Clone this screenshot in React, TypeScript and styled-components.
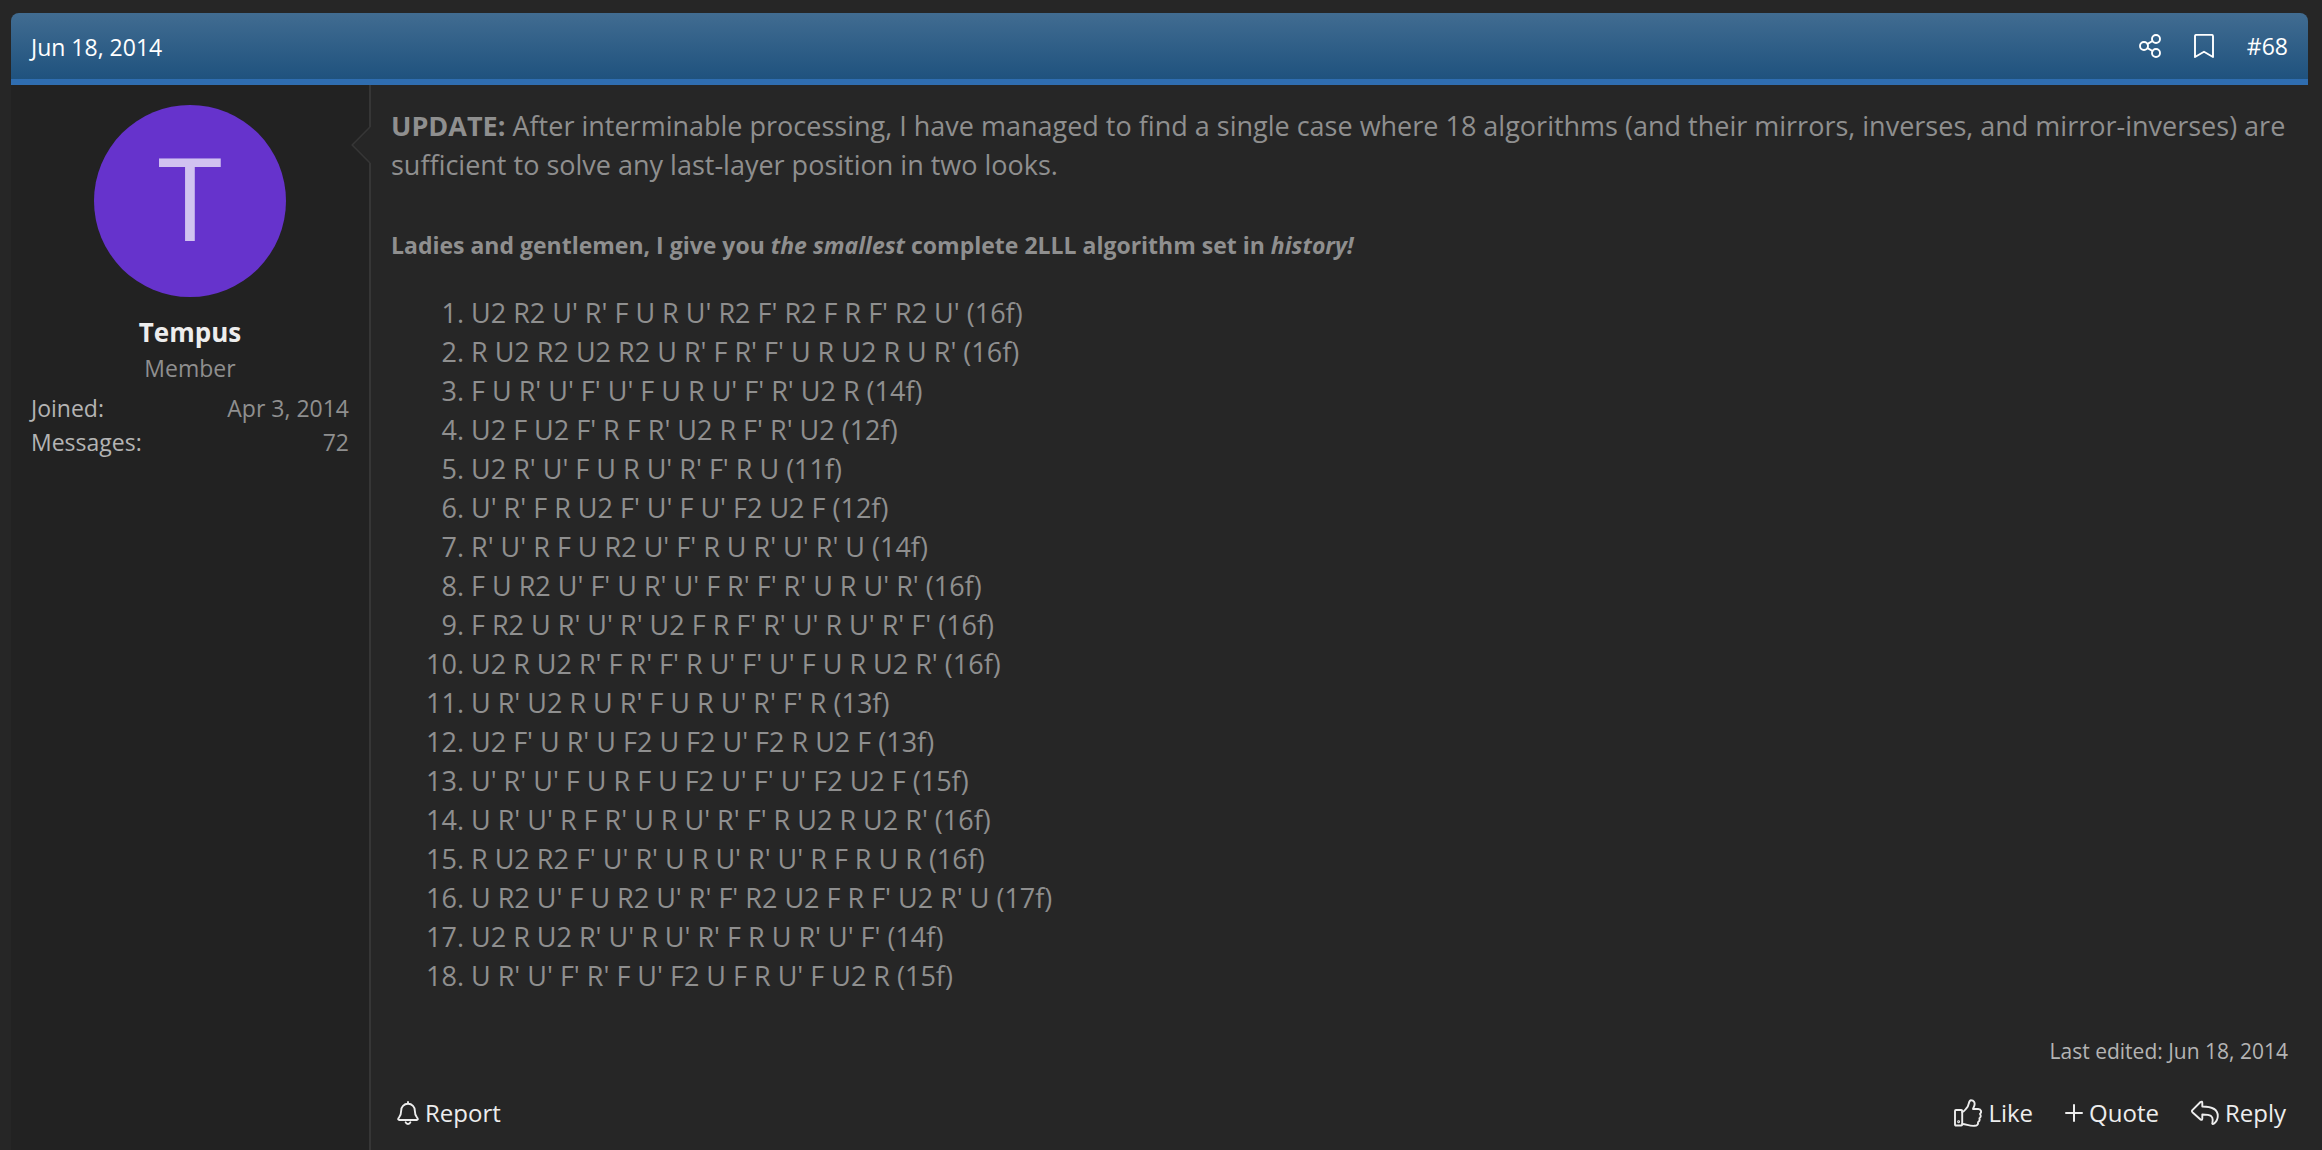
import React from 'react';
import styled, { createGlobalStyle } from 'styled-components';

const GlobalStyle = createGlobalStyle`
  * { box-sizing: border-box; }
  body {
    margin: 0;
    background: #262626;
    color: #8f8f8f;
    font-family: 'Segoe UI', 'Open Sans', 'Noto Sans', sans-serif;
    font-size: 23px;
    line-height: 34px;
  }
`;

const Message = styled.article`
  margin: 13px 14px 0 11px;
`;

const Header = styled.header`
  display: flex;
  justify-content: space-between;
  align-items: center;
  height: 72px;
  padding: 2px 20px 0;
  border-bottom: 6px solid #2f6db0;
  border-radius: 8px 8px 0 0;
  background: linear-gradient(to bottom, #416c91, #1f527e);
  color: #ffffff;
`;

const HeaderActions = styled.div`
  display: flex;
  align-items: center;
  gap: 33px;
  padding-bottom: 2px;
`;

const PlainLink = styled.a`
  display: inline-flex;
  align-items: center;
  color: inherit;
  text-decoration: none;
`;

const Body = styled.div`
  display: flex;
`;

const UserCell = styled.aside`
  flex: 0 0 360px;
  position: relative;
  padding: 20px;
  border-right: 2px solid #363636;
  background: #222222;
  text-align: center;
`;

const Arrow = styled.svg`
  position: absolute;
  top: 41px;
  right: -2px;
`;

const Avatar = styled.a`
  display: flex;
  align-items: center;
  justify-content: center;
  width: 192px;
  height: 192px;
  margin: 0 auto 17px;
  padding-bottom: 10px;
  border-radius: 50%;
  background: #6633cc;
  color: #d1c2f0;
  font-size: 116px;
  line-height: 182px;
  text-decoration: none;
`;

const UserName = styled.h4`
  margin: 0;
  color: #ededed;
  font-size: 26px;
  line-height: 37px;
  font-weight: 700;
`;

const UserTitle = styled.h5`
  margin: 0 0 6px;
  font-size: 23px;
  line-height: 34px;
  font-weight: 400;
`;

const Stat = styled.dl`
  display: flex;
  justify-content: space-between;
  margin: 0;
  dt { color: #b4b4b4; }
  dd { margin: 0; }
`;

const Main = styled.div`
  flex: 1;
  min-width: 0;
  display: flex;
  flex-direction: column;
  padding: 20px;
`;

const Content = styled.div`
  font-size: 27px;
  line-height: 39px;
`;

const Paragraph = styled.p`
  margin: 1px 0 42px;
`;

const Announcement = styled.p`
  margin: 0 0 28px;
  font-size: 23px;
  font-weight: 700;
`;

const Algorithms = styled.ol`
  margin: 0;
  padding-left: 80px;
`;

const LastEdit = styled.div`
  margin-top: 39px;
  color: #b4b4b4;
  font-size: 21px;
  line-height: 34px;
  text-align: right;
`;

const ActionBar = styled.footer`
  display: flex;
  justify-content: space-between;
  margin-top: 26px;
  padding: 0 2px 0 6px;
`;

const ActionGroup = styled.div`
  display: flex;
  gap: 32px;
`;

const Action = styled(PlainLink)`
  gap: 6px;
  color: #ededed;
  font-size: 24px;
  line-height: 38px;
`;

const Icon = styled.svg`
  display: block;
  fill: none;
  stroke: currentColor;
  stroke-width: 1.9;
  stroke-linejoin: round;
  stroke-linecap: round;
`;

const algorithms = [
  "U2 R2 U' R' F U R U' R2 F' R2 F R F' R2 U' (16f)",
  "R U2 R2 U2 R2 U R' F R' F' U R U2 R U R' (16f)",
  "F U R' U' F' U' F U R U' F' R' U2 R (14f)",
  "U2 F U2 F' R F R' U2 R F' R' U2 (12f)",
  "U2 R' U' F U R U' R' F' R U (11f)",
  "U' R' F R U2 F' U' F U' F2 U2 F (12f)",
  "R' U' R F U R2 U' F' R U R' U' R' U (14f)",
  "F U R2 U' F' U R' U' F R' F' R' U R U' R' (16f)",
  "F R2 U R' U' R' U2 F R F' R' U' R U' R' F' (16f)",
  "U2 R U2 R' F R' F' R U' F' U' F U R U2 R' (16f)",
  "U R' U2 R U R' F U R U' R' F' R (13f)",
  "U2 F' U R' U F2 U F2 U' F2 R U2 F (13f)",
  "U' R' U' F U R F U F2 U' F' U' F2 U2 F (15f)",
  "U R' U' R F R' U R U' R' F' R U2 R U2 R' (16f)",
  "R U2 R2 F' U' R' U R U' R' U' R F R U R (16f)",
  "U R2 U' F U R2 U' R' F' R2 U2 F R F' U2 R' U (17f)",
  "U2 R U2 R' U' R U' R' F R U R' U' F' (14f)",
  "U R' U' F' R' F U' F2 U F R U' F U2 R (15f)",
];

export default function App() {
  return (
    <>
      <GlobalStyle />
      <Message>
        <Header>
          <PlainLink href="#post"><time dateTime="2014-06-18">Jun 18, 2014</time></PlainLink>
          <HeaderActions>
            <PlainLink href="#share" aria-label="Share">
              <Icon width="22" height="24" viewBox="0 0 22 24">
                <circle cx="5" cy="12" r="4" />
                <circle cx="17" cy="5" r="4" />
                <circle cx="17" cy="19" r="4" />
                <path d="M8.600 9.900l4.900-2.900M8.600 14.100l4.900 2.900" />
              </Icon>
            </PlainLink>
            <PlainLink href="#bookmark" aria-label="Bookmark">
              <Icon width="20" height="24" viewBox="0 0 20 24">
                <path d="M1 23V2.200Q1 .9 2.300 .9H17.700Q19 .9 19 2.200V23L10 17.800Z" />
              </Icon>
            </PlainLink>
            <PlainLink href="#post-68">#68</PlainLink>
          </HeaderActions>
        </Header>
        <Body>
          <UserCell>
            <Arrow width="20" height="38" viewBox="0 0 20 38">
              <path d="M20 1L18.5 1L1 19L18.5 37H20Z" fill="#262626" />
              <path d="M19 1L1.2 19L19 37" fill="none" stroke="#363636" strokeWidth="1.6" />
            </Arrow>
            <Avatar href="#tempus">T</Avatar>
            <UserName><PlainLink href="#tempus">Tempus</PlainLink></UserName>
            <UserTitle>Member</UserTitle>
            <Stat><dt>Joined:</dt><dd>Apr 3, 2014</dd></Stat>
            <Stat><dt>Messages:</dt><dd>72</dd></Stat>
          </UserCell>
          <Main>
            <Content>
              <Paragraph>
                <b>UPDATE:</b> After interminable processing, I have managed to find a single case where 18
                algorithms (and their mirrors, inverses, and mirror-inverses) are sufficient to solve any
                last-layer position in two looks.
              </Paragraph>
              <Announcement>
                Ladies and gentlemen, I give you <i>the smallest</i> complete 2LLL algorithm set in{' '}
                <i>history!</i>
              </Announcement>
              <Algorithms>
                {algorithms.map((moves) => <li key={moves}>{moves}</li>)}
              </Algorithms>
            </Content>
            <LastEdit>Last edited: <time dateTime="2014-06-18">Jun 18, 2014</time></LastEdit>
            <ActionBar>
              <Action href="#report">
                <Icon width="22" height="24" viewBox="0 0 22 24">
                  <path d="M11 1v1.800M11 2.800C6.800 2.800 4.200 6 4.200 9.500C4.200 14.500 2.600 15.800 1.500 17.200C.8 18.200 1.300 19 2.200 19H19.800C20.700 19 21.200 18.200 20.500 17.200C19.400 15.800 17.800 14.500 17.800 9.500C17.800 6 15.200 2.800 11 2.800Z" />
                  <path d="M8.600 21.300Q9.200 23 11 23T13.400 21.300" />
                </Icon>
                Report
              </Action>
              <ActionGroup>
                <Action href="#like">
                  <Icon width="28" height="28" viewBox="0 0 28 28">
                    <path d="M2 11H7.200Q8.200 11 8.200 12V25.500Q8.200 26.500 7.200 26.500H2Q1 26.500 1 25.500V12Q1 11 2 11Z" />
                    <path d="M8.200 13C10 12.800 11 11 12.500 9.200C15.500 6.800 14.200 1.200 17 1.200C20 1.200 21 3.500 20.500 6C20.200 7.500 19.300 8.800 19 10H24.200C27.200 10 28 13.300 26 15C27.200 16.500 26.800 18.500 25.400 19.300C26 21 25.400 22.400 24 23.200C24.400 25.500 23 26.800 20.500 26.800C15 27.200 12.500 25 8.200 25" />
                    <circle cx="4.600" cy="22.800" r=".5" />
                  </Icon>
                  Like
                </Action>
                <Action href="#quote">
                  <Icon width="18" height="18" viewBox="0 0 18 18">
                    <path d="M9 1V17M1 9H17" strokeWidth="2" />
                  </Icon>
                  Quote
                </Action>
                <Action href="#reply">
                  <Icon width="28" height="26" viewBox="0 0 28 26">
                    <path d="M1.400 10.200L9.500 2Q11.300 .8 11.300 3V6.500C20 6.500 26.800 8.500 26.800 16C26.800 19 25 22 22.800 23.800C21.800 24.400 21 23.800 21.300 22.800C23 15.800 19.500 14.500 11.300 14.500V18.500Q11.300 20.700 9.500 19.500L1.400 12.200Q.5 11.200 1.400 10.200Z" />
                  </Icon>
                  Reply
                </Action>
              </ActionGroup>
            </ActionBar>
          </Main>
        </Body>
      </Message>
    </>
  );
}
